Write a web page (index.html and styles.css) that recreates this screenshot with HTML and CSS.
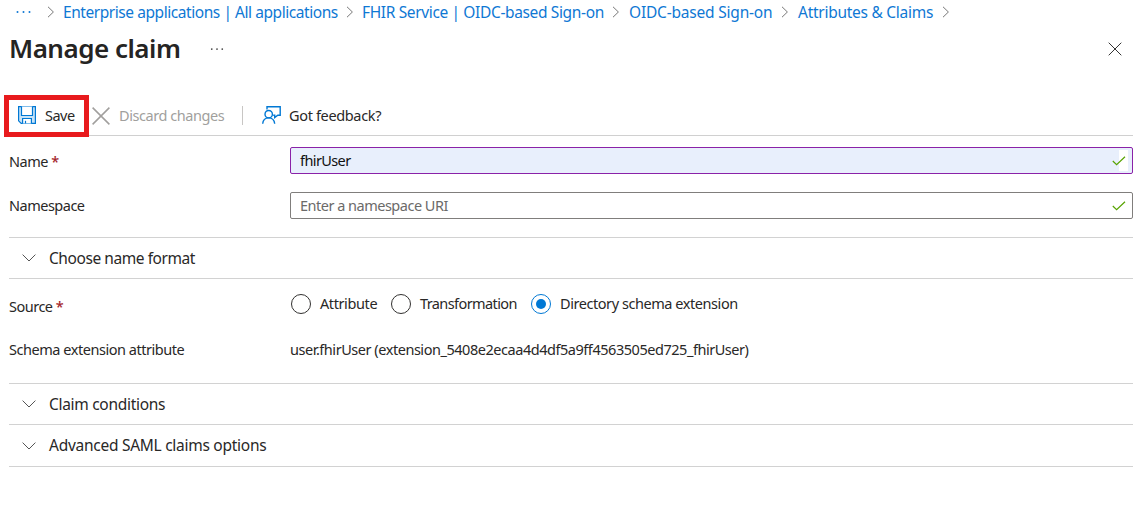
FILE: index.html
```html
<!DOCTYPE html>
<html lang="en">
<head>
<meta charset="utf-8">
<title>Manage claim</title>
<link rel="stylesheet" href="styles.css">
</head>
<body>
<svg class="defs" width="0" height="0">
  <symbol id="right" viewBox="0 0 8 12"><path d="M1 .8 6.4 6 1 11.2"/></symbol>
  <symbol id="down" viewBox="0 0 14 8"><path d="M.6.6 7 7 13.4.6"/></symbol>
  <symbol id="check" viewBox="0 0 14 10"><path d="M.8 5 4.6 8.6 13 .8"/></symbol>
  <symbol id="dots" viewBox="0 0 16 4"><circle cx="2" cy="2" r="1"/><circle cx="8" cy="2" r="1"/><circle cx="14" cy="2" r="1"/></symbol>
</svg>
<main class="page">
  <nav class="crumbs">
    <svg class="crumb-dots"><use href="#dots"/></svg>
    <svg class="sep"><use href="#right"/></svg>
    <a class="crumb crumb-apps">Enterprise applications | All applications</a>
    <svg class="sep"><use href="#right"/></svg>
    <a class="crumb crumb-service">FHIR Service | OIDC-based Sign-on</a>
    <svg class="sep"><use href="#right"/></svg>
    <a class="crumb crumb-signon">OIDC-based Sign-on</a>
    <svg class="sep"><use href="#right"/></svg>
    <a class="crumb crumb-claims">Attributes &amp; Claims</a>
    <svg class="sep"><use href="#right"/></svg>
  </nav>
  <header class="header">
    <h1 class="title">Manage claim</h1>
    <svg class="title-dots"><use href="#dots"/></svg>
    <svg class="close" viewBox="0 0 14 14"><path d="M.7.7 13.3 13.3M13.3.7.7 13.3"/></svg>
  </header>
  <div class="toolbar">
    <div class="save">
      <svg class="save-icon" viewBox="0 0 18 18"><path class="save-body" d="M.6.6H17.4V17.4H3.2L.6 14.8Z"/><path class="save-slots" d="M3.5.6V9.5H14.5V.6M4.6 17.4V12.5H13.4V17.4"/><path d="M7.5 17.4V14.8"/></svg>
      <span class="save-text">Save</span>
    </div>
    <svg class="discard-icon" viewBox="0 0 18 18"><path d="M.6.6 17.4 17.4M17.4.6.6 17.4"/></svg>
    <span class="discard-text">Discard changes</span>
    <span class="divider"></span>
    <svg class="feedback-icon" viewBox="0 0 19 18"><path d="M5 3.6V.7H18.2V9.2H15.8L12.7 11.5V9.2H11.2"/><circle cx="6.7" cy="8.2" r="3.7"/><path d="M.7 17.8C1 14 3.5 11.9 6.7 11.9S12.3 14 12.7 17.8"/></svg>
    <span class="feedback-text">Got feedback?</span>
  </div>
  <div class="form">
    <div class="row">
      <label class="label label-name"><span class="t-name">Name</span> <b class="star">*</b></label>
      <div class="input input-filled"><span class="t-user">fhirUser</span><span class="valid"><svg class="check"><use href="#check"/></svg></span></div>
    </div>
    <div class="row row-namespace">
      <label class="label"><span class="t-namespace">Namespace</span></label>
      <div class="input"><span class="t-placeholder">Enter a namespace URI</span><span class="valid"><svg class="check"><use href="#check"/></svg></span></div>
    </div>
  </div>
  <section class="fold"><svg class="down"><use href="#down"/></svg><span class="fold-text t-format">Choose name format</span></section>
  <div class="source">
    <div class="row">
      <label class="label label-source"><span class="t-source">Source</span> <b class="star">*</b></label>
      <div class="radios">
        <span class="radio"></span><span class="option t-attribute">Attribute</span>
        <span class="radio"></span><span class="option t-transformation">Transformation</span>
        <span class="radio radio-on"></span><span class="option t-directory">Directory schema extension</span>
      </div>
    </div>
    <div class="row row-schema">
      <label class="label"><span class="t-schema">Schema extension attribute</span></label>
      <span class="t-value">user.fhirUser (extension_5408e2ecaa4d4df5a9ff4563505ed725_fhirUser)</span>
    </div>
  </div>
  <section class="fold"><svg class="down"><use href="#down"/></svg><span class="fold-text">Claim conditions</span></section>
  <section class="fold fold-last"><svg class="down"><use href="#down"/></svg><span class="fold-text t-advanced">Advanced SAML claims options</span></section>
</main>
</body>
</html>
```
FILE: styles.css
```css
* { box-sizing: border-box; }
body {
  margin: 0;
  background: #fff;
  color: #292827;
  font: 14.5px/20px "Noto Sans", "Open Sans", sans-serif;
  letter-spacing: -0.5px;
  white-space: nowrap;
}
svg { display: block; flex: none; fill: none; stroke: currentColor; }
.defs { position: absolute; }
.page { display: flow-root; width: 1124px; margin-left: 9px; }

.crumbs { display: flex; align-items: center; height: 24px; padding-left: 6px; font-size: 15.5px; }
.crumb { color: #0f78d4; flex: none; padding-bottom: 1px; }
.crumb-apps { width: 275px; letter-spacing: -0.44px; }
.crumb-service { width: 243px; letter-spacing: -0.36px; }
.crumb-signon { width: 145px; letter-spacing: -0.2px; }
.crumb-claims { width: 136px; letter-spacing: -0.27px; }
.crumb-dots { width: 17px; height: 4px; margin-right: 15px; color: #0f78d4; fill: currentColor; stroke: none; }
.sep { width: 8px; height: 12px; margin: 0 8px; color: #777; }
.crumb-dots + .sep { margin-left: 0; }
.crumb-service + .sep { margin-left: 7px; margin-right: 9px; }
.crumb-signon + .sep { margin-left: 7px; margin-right: 9px; }

.header { display: flex; align-items: center; height: 50px; }
.title { margin: 0 0 2px; width: 201px; font-size: 26px; line-height: 34px; font-weight: 600; letter-spacing: -0.5px; color: #252423; }
.title-dots { width: 14px; height: 4px; fill: #444; stroke: none; }
.close { width: 14px; height: 14px; margin-left: auto; margin-right: 11px; color: #333; }

.toolbar { display: flex; align-items: center; height: 42px; margin: 21px 0 0 -5px; position: relative; }
.toolbar::after { content: ""; position: absolute; left: 5px; right: 0; top: 40px; height: 1px; background: #d0d0d0; }
.save { display: flex; align-items: center; width: 85px; height: 42px; padding-left: 9px; border: 5px solid #e81a1d; background: #fff; z-index: 1; }
.save-icon { width: 18px; height: 18px; margin: 0 9px 2px 0; color: #0078d4; stroke-width: 1.2; }
.save-body { fill: #c7e3f7; }
.save-slots { fill: #fff; }
.save-text, .discard-text, .feedback-text { padding-bottom: 2px; }
.discard-icon { width: 18px; height: 18px; margin: 0 9px 1px 3px; color: #a19f9d; stroke-width: 1.5; }
.discard-text { width: 106px; color: #a19f9d; letter-spacing: -0.43px; }
.divider { width: 1px; height: 19px; margin: 0 19px 2px 17px; background: #c8c6c4; }
.feedback-icon { width: 19px; height: 18px; margin: 0 8px 2px 0; color: #0078d4; stroke-width: 1.4; }
.feedback-text { letter-spacing: -0.35px; }

.form { height: 100px; padding-top: 10px; }
.row { display: flex; align-items: center; height: 27px; }
.row-namespace { margin-top: 18px; }
.label { width: 281px; flex: none; padding-bottom: 1px; }
.label-name { padding: 1px 0 0; }
.star { color: #a4262c; font-weight: 500; }
.input { display: flex; align-items: center; flex: 1; height: 27px; padding: 0 4px 0 9px; border: 1px solid #807e7c; border-radius: 2px; }
.input-filled { border-color: #8a22a8; background: #e8effc; color: #111; }
.t-user, .t-placeholder { padding-bottom: 2px; }
.t-user { letter-spacing: -0.6px; }
.valid { display: flex; align-items: center; justify-content: flex-end; width: 9px; height: 21px; margin-left: auto; padding-right: 2px; }
.input-filled .valid { background: #fff; }
.check { width: 14px; height: 10px; color: #57a300; stroke-width: 1.2; }
.t-placeholder { color: #6b6a69; }

.fold { display: flex; align-items: center; height: 41px; padding-left: 13px; border-top: 1px solid #d2d2d2; font-size: 15.5px; letter-spacing: -0.3px; }
.fold-text { padding-bottom: 1px; }
.t-format { letter-spacing: -0.43px; }
.t-advanced { letter-spacing: -0.27px; }
.down { width: 14px; height: 8px; margin-right: 13px; color: #555; }
.fold-last { height: 43px; border-bottom: 1px solid #d2d2d2; }
.fold-last .fold-text { padding-bottom: 2px; }

.source { height: 105px; padding-top: 11px; border-top: 1px solid #d2d2d2; }
.label-source { padding: 5px 0 0; }
.radios { display: flex; align-items: center; }
.radio { width: 20px; height: 20px; margin: 0 9px 0 1px; border: 1px solid #323130; border-radius: 50%; }
.radio-on { display: grid; place-items: center; border-color: #0078d4; }
.radio-on::before { content: ""; width: 10px; height: 10px; border-radius: 50%; background: #0078d4; }
.option { padding-bottom: 1px; }
.t-attribute { width: 70px; letter-spacing: -0.4px; }
.t-transformation { width: 110px; letter-spacing: -0.6px; }
.t-directory { letter-spacing: -0.44px; }
.row-schema { margin-top: 19px; }
.t-schema { letter-spacing: -0.46px; }
.t-value { padding-bottom: 1px; letter-spacing: -0.46px; }
```
